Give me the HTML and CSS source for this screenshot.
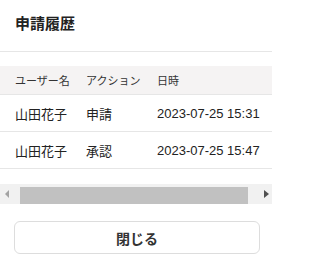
FILE: index.html
```html
<!DOCTYPE html>
<html lang="ja">
<head>
<meta charset="utf-8">
<link rel="stylesheet" href="styles.css">
</head>
<body>
<div class="dialog">
  <div class="dialog-header">
    <h2 class="title">申請履歴</h2>
  </div>
  <div class="table-wrap">
    <table class="history">
      <colgroup>
        <col class="col-user">
        <col class="col-action">
        <col class="col-date">
      </colgroup>
      <thead>
        <tr><th>ユーザー名</th><th>アクション</th><th>日時</th></tr>
      </thead>
      <tbody>
        <tr><td>山田花子</td><td>申請</td><td>2023-07-25 15:31</td></tr>
        <tr><td>山田花子</td><td>承認</td><td>2023-07-25 15:47</td></tr>
      </tbody>
    </table>
  </div>
  <div class="scrollbar">
    <span class="arrow arrow-left"></span>
    <div class="track"><div class="thumb"></div></div>
    <span class="arrow arrow-right"></span>
  </div>
  <div class="dialog-footer">
    <button class="close-btn" type="button">閉じる</button>
  </div>
</div>
</body>
</html>
```
FILE: styles.css
```css
html, body {
  margin: 0;
  padding: 0;
  background: #ffffff;
}

body {
  font-family: "Liberation Sans", "Noto Sans CJK JP", sans-serif;
  color: #222222;
}

.dialog {
  width: 272px;
  height: 268px;
  overflow: hidden;
}

.dialog-header {
  padding: 14px 15px 18px;
  border-bottom: 1px solid #e6e6e6;
}

.title {
  margin: 0;
  font-size: 15px;
  line-height: 19px;
  font-weight: 700;
  color: #222222;
}

.table-wrap {
  margin-top: 14px;
  overflow: hidden;
}

.history {
  width: 290px;
  table-layout: fixed;
  border-collapse: collapse;
}

.col-user { width: 78px; }
.col-action { width: 71px; }
.col-date { width: 141px; }

.history th,
.history td {
  padding: 0 8px;
  text-align: left;
  white-space: nowrap;
  vertical-align: middle;
  border-bottom: 1px solid #e6e6e6;
}

.history th:first-child,
.history td:first-child {
  padding-left: 15px;
}

.history th {
  height: 28px;
  font-size: 11px;
  font-weight: 400;
  color: #333333;
  background: #f5f3f3;
}

.history td {
  height: 36px;
  font-size: 13px;
  color: #222222;
}

.scrollbar {
  margin-top: 15px;
  height: 20px;
  background: #f1f1f1;
  display: flex;
  align-items: center;
}

.track {
  flex: 1;
  height: 100%;
  display: flex;
  align-items: center;
  padding: 0 7px 0 3px;
}

.thumb {
  width: 100%;
  height: 17px;
  margin-top: 2px;
  background: #c1c1c1;
}

.arrow {
  width: 17px;
  height: 20px;
  display: flex;
  align-items: center;
  justify-content: center;
}

.arrow::before {
  content: "";
  width: 0;
  height: 0;
  border-top: 4px solid transparent;
  border-bottom: 4px solid transparent;
}

.arrow-left::before {
  border-right: 4px solid #a3a3a3;
  margin-left: -4px;
}

.arrow-right::before {
  border-left: 5px solid #505050;
  margin-left: 6px;
}

.dialog-footer {
  padding: 17px 12px 0 14px;
}

.close-btn {
  display: block;
  width: 100%;
  height: 33px;
  background: #ffffff;
  border: 1px solid #dddddd;
  border-radius: 6px;
  font-family: "Liberation Sans", "Noto Sans CJK JP", sans-serif;
  font-size: 14px;
  font-weight: 700;
  color: #333333;
  padding: 0;
}
```
